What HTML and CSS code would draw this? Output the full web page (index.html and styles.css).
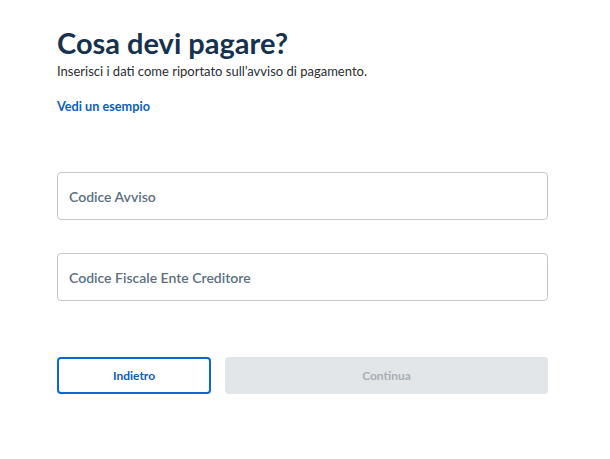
FILE: index.html
```html
<!DOCTYPE html>
<html lang="it">
<head>
    <meta charset="UTF-8">
    <meta name="viewport" content="width=device-width, initial-scale=1.0">
    <title>Cosa devi pagare?</title>
    <link rel="stylesheet" href="styles.css">
</head>
<body>
    <div class="page">
        <h1 class="title">Cosa devi pagare?</h1>
        <p class="subtitle">Inserisci i dati come riportato sull’avviso di pagamento.</p>
        <a class="example-link" href="#">Vedi un esempio</a>

        <div class="fields">
            <div class="field"><input type="text" placeholder="Codice Avviso"></div>
            <div class="field"><input type="text" placeholder="Codice Fiscale Ente Creditore"></div>
        </div>

        <div class="actions">
            <button class="btn btn-outline">Indietro</button>
            <button class="btn btn-disabled" disabled>Continua</button>
        </div>
    </div>
</body>
</html>
```

FILE: styles.css
```css
body {
    margin: 0;
    padding: 0;
    background-color: #ffffff;
    font-family: Lato, "Open Sans", sans-serif;
    color: #17324d;
}

.page {
    width: 491px;
    margin-left: 57px;
    padding-top: 27px;
    display: flex;
    flex-direction: column;
}

.title {
    margin: 0;
    font-size: 29px;
    font-weight: 700;
    line-height: 32px;
    color: #17324d;
}

.subtitle {
    margin: 4px 0 0 0;
    font-size: 13px;
    line-height: 16px;
    color: #2b2e33;
}

.example-link {
    margin-top: 19px;
    font-size: 12.7px;
    font-weight: 700;
    line-height: 16px;
    color: #0b5ebe;
    text-decoration: none;
}

.fields {
    margin-top: 58px;
    display: flex;
    flex-direction: column;
    gap: 33px;
}

.field input {
    box-sizing: border-box;
    width: 100%;
    height: 48px;
    padding: 0 11px;
    border: 1px solid #c5c7c9;
    border-radius: 4px;
    font-family: inherit;
    font-size: 14px;
    font-weight: 600;
    outline: none;
}

.field input::placeholder {
    color: #5c6f82;
}

.actions {
    margin-top: 56px;
    display: flex;
    gap: 14px;
}

.btn {
    height: 37px;
    border-radius: 4px;
    font-family: inherit;
    font-size: 12px;
    font-weight: 700;
    cursor: pointer;
}

.btn-outline {
    width: 154px;
    background-color: #ffffff;
    border: 2px solid #0b68d0;
    color: #0b5ebe;
}

.btn-disabled {
    flex: 1;
    background-color: #e3e6e9;
    border: none;
    color: #a7aeb5;
    cursor: default;
}
```
